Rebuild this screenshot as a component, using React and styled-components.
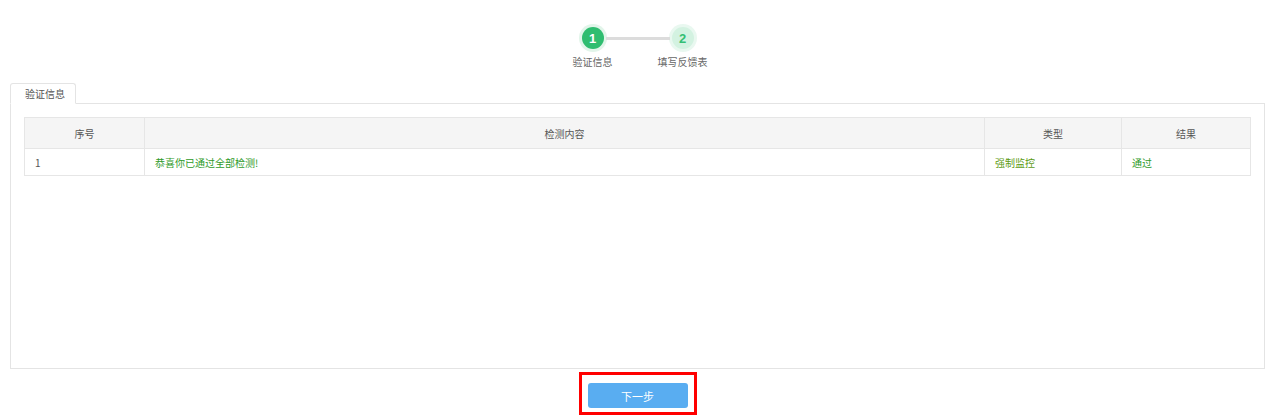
import React from "react";
import styled, { createGlobalStyle } from "styled-components";

const GlobalStyle = createGlobalStyle`
  html, body {
    margin: 0;
    padding: 0;
    background: #fff;
  }
  body {
    font-family: "Noto Sans CJK SC", "Liberation Sans", sans-serif;
    font-size: 10px;
    color: #555;
  }
`;

const steps = [
  { num: 1, label: "验证信息", active: true },
  { num: 2, label: "填写反馈表", active: false },
];

const rows = [
  { id: 1, content: "恭喜你已通过全部检测!", type: "强制监控", result: "通过" },
];

const App = () => {
  return (
    <Page>
      <GlobalStyle />
      <Steps>
        {steps.map((s, i) => (
          <React.Fragment key={s.num}>
            {i > 0 && <StepLine />}
            <Step>
              <Circle active={s.active}>{s.num}</Circle>
              <StepLabel>{s.label}</StepLabel>
            </Step>
          </React.Fragment>
        ))}
      </Steps>

      <Tabs>
        <Tab>验证信息</Tab>
      </Tabs>
      <Panel>
        <Table>
          <colgroup>
            <col style={{ width: 120 }} />
            <col />
            <col style={{ width: 137 }} />
            <col style={{ width: 129 }} />
          </colgroup>
          <thead>
            <tr>
              <Th>序号</Th>
              <Th>检测内容</Th>
              <Th>类型</Th>
              <Th>结果</Th>
            </tr>
          </thead>
          <tbody>
            {rows.map((r) => (
              <tr key={r.id}>
                <Td>{r.id}</Td>
                <Td green>{r.content}</Td>
                <Td olive>{r.type}</Td>
                <Td green>{r.result}</Td>
              </tr>
            ))}
          </tbody>
        </Table>
      </Panel>

      <Footer>
        <Highlight>
          <NextButton>下一步</NextButton>
        </Highlight>
      </Footer>
    </Page>
  );
};

export default App;

const Page = styled.div`
  width: 1255px;
  margin-left: 10px;
  height: 416px;
  overflow: hidden;
`;

const Steps = styled.div`
  display: flex;
  justify-content: center;
  align-items: flex-start;
  padding-top: 27px;
  height: 83px;
  box-sizing: border-box;
`;

const Step = styled.div`
  display: flex;
  flex-direction: column;
  align-items: center;
  width: 60px;
  margin: 0 -17px;
`;

const Circle = styled.div`
  width: 22px;
  height: 22px;
  border-radius: 50%;
  display: flex;
  align-items: center;
  justify-content: center;
  font-family: "Liberation Sans", Arial, sans-serif;
  font-weight: bold;
  font-size: 13px;
  background: ${(p) => (p.active ? "#2fbd70" : "#d3f2e1")};
  color: ${(p) => (p.active ? "#fff" : "#35bf74")};
  box-shadow: 0 0 0 3px ${(p) => (p.active ? "#e2f5ea" : "#e9f8f0")};
`;

const StepLabel = styled.div`
  margin-top: 5px;
  font-size: 10px;
  color: #666;
  white-space: nowrap;
`;

const StepLine = styled.div`
  width: 64px;
  height: 3px;
  margin-top: 10px;
  background: #dcdcdc;
  position: relative;
  z-index: 0;
`;

const Tabs = styled.div`
  display: flex;
  height: 21px;
  position: relative;
  z-index: 1;
  margin-bottom: -1px;
`;

const Tab = styled.div`
  width: 66px;
  padding: 0 0 0 14px;
  box-sizing: border-box;
  border: 1px solid #e4e4e4;
  border-bottom: 1px solid #fff;
  border-radius: 3px 3px 0 0;
  background: #fff;
  color: #555;
  line-height: 19px;
  font-size: 10px;
`;

const Panel = styled.div`
  height: 266px;
  box-sizing: border-box;
  border: 1px solid #e4e4e4;
  padding: 13px 13px;
`;

const Table = styled.table`
  width: 100%;
  border-collapse: collapse;
  table-layout: fixed;
  border: 1px solid #e6e6e6;
`;

const Th = styled.th`
  height: 30px;
  padding: 0;
  background: #f5f5f5;
  border: 1px solid #e6e6e6;
  font-weight: normal;
  font-size: 10px;
  color: #555;
  text-align: center;
`;

const Td = styled.td`
  height: 26px;
  padding: 0 10px;
  border: 1px solid #e6e6e6;
  font-size: 10px;
  color: ${(p) => (p.green ? "#2f9a2a" : p.olive ? "#5c9a14" : "#555")};
`;

const Footer = styled.div`
  display: flex;
  justify-content: center;
  padding-top: 3px;
`;

const Highlight = styled.div`
  border: 3px solid #f00;
  padding: 8px 6px 4px;
`;

const NextButton = styled.button`
  width: 100px;
  height: 25px;
  border: none;
  border-radius: 3px;
  background: #59adf1;
  color: #fff;
  font-family: "Noto Sans CJK SC", sans-serif;
  font-size: 11px;
  cursor: pointer;
  display: block;
`;
